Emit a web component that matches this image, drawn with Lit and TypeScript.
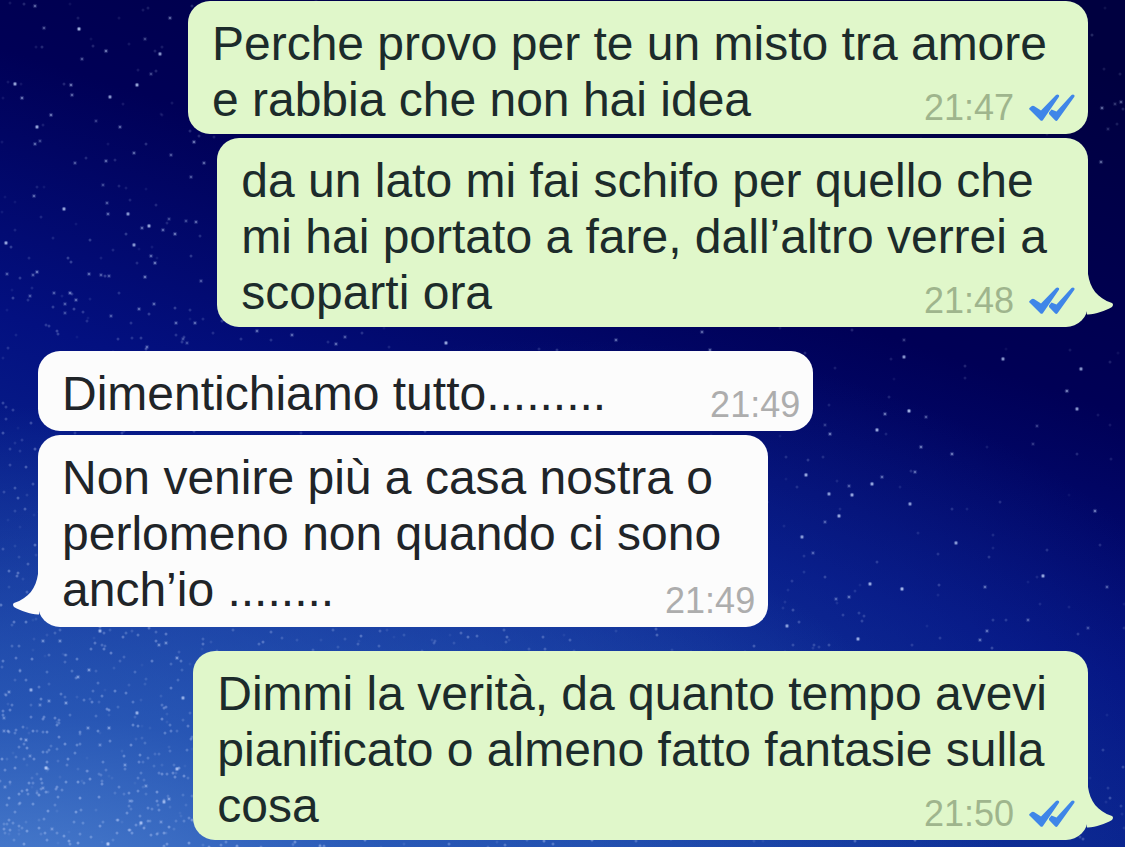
import { LitElement, html, svg, css, nothing } from "lit";
import { customElement, property } from "lit/decorators.js";
import { classMap } from "lit/directives/class-map.js";

interface Message {
  lines: string[];
  time: string;
  sent: boolean;
  last: boolean;
}

const MESSAGES: Message[] = [
  { lines: ["Perche provo per te un misto tra amore", "e rabbia che non hai idea"], time: "21:47", sent: true, last: false },
  { lines: ["da un lato mi fai schifo per quello che", "mi hai portato a fare, dall’altro verrei a", "scoparti ora"], time: "21:48", sent: true, last: true },
  { lines: ["Dimentichiamo tutto........."], time: "21:49", sent: false, last: false },
  { lines: ["Non venire più a casa nostra o", "perlomeno non quando ci sono", "anch’io ........"], time: "21:49", sent: false, last: true },
  { lines: ["Dimmi la verità, da quanto tempo avevi", "pianificato o almeno fatto fantasie sulla", "cosa"], time: "21:50", sent: true, last: true },
];

// Brightest stars: x, y, opacity in percent.
const BRIGHT: number[][] = [
  [35,6,60],[79,29,100],[44,28,50],[106,51,70],[160,54,80],[145,39,40],[170,18,60],[82,59,50],[15,84,90],[71,85,70],[72,95,60],[22,98,70],
  [110,97,80],[137,85,90],[151,74,40],[51,115,70],[37,127,90],[120,127,60],[35,144,60],[40,141,40],[96,121,35],[106,161,60],[134,153,60],[75,163,50],
  [171,155,50],[204,163,60],[194,142,70],[191,177,50],[34,196,60],[103,185,40],[107,203,50],[64,209,90],[108,214,60],[128,214,80],[149,226,90],
  [142,228,60],[163,230,60],[175,234,70],[196,222,60],[169,219,40],[186,221,40],[134,245,80],[6,243,90],[151,256,60],[155,263,70],[145,277,70],[37,272,70],
  [33,275,50],[89,274,60],[7,274,50],[101,275,50],[109,276,50],[70,293,70],[76,300,60],[54,293,50],[65,304,50],[30,296,50],[154,304,60],[139,309,60],
  [176,323,60],[195,323,60],[201,281,50],[111,316,50],[65,313,40],[183,339,40],
  [257,331,60],[292,335,60],[345,337,50],[336,344,60],[446,343,90],[616,340,60],[702,332,60],[147,347,60],[187,343,40],[710,350,60],
  [904,357,80],[904,340,35],[1003,359,80],[1081,369,80],[1067,391,70],[1077,409,80],[909,411,100],[885,414,70],[926,417,50],[877,430,90],
  [830,434,70],[825,425,30],[921,447,70],[952,454,70],[915,472,60],[806,475,90],[872,484,90],[882,477,60],[829,494,80],[852,495,90],[849,486,50],
  [910,504,80],[839,516,90],[825,522,50],[802,537,80],[956,543,80],[1095,511,70],[813,553,50],[870,584,90],[902,589,100],[1043,576,90],
  [985,587,60],[1107,587,50],[849,597,60],[836,599,50],[787,626,80],[858,639,90],[980,640,60],[1028,620,50],[987,631,60],[1088,628,40],[1037,426,35],[1033,444,30],
  [1102,108,60],[1115,104,30],[1121,102,50],[1101,162,60],[1108,129,25],
  [46,768,100],[108,844,100],[141,823,90],[177,769,90],[164,802,80],[169,799,70],[137,713,80],[31,690,80],[66,703,70],[49,701,60],[26,740,70],
  [183,698,80],[177,658,70],[109,728,70],[88,728,60],[78,677,70],[89,670,70],[100,631,80],[43,641,60],[60,641,60],[166,643,60],[159,645,60],[9,692,60],
  [30,756,50],[40,705,50],[4,718,50],[4,731,50],[125,765,60],[146,786,60],[130,801,50],[100,745,50],[52,829,50],[161,822,50],[43,788,50],[5,787,50],
];

// Deterministic scatter of faint stars, denser towards the lower left.
function scatter(count: number, floor: number): number[][] {
  let seed = 7919;
  const next = () => {
    seed = (seed * 16807) % 2147483647;
    return seed / 2147483647;
  };
  const stars: number[][] = [];
  while (stars.length < count) {
    const x = next() * 1125;
    const y = next() * 847;
    const glow = Math.max(0, y / 847 - (x / 1125) * 0.6);
    if (next() < floor + glow * glow) {
      stars.push([Math.round(x), Math.round(y), Math.round(6 + next() * (12 + glow * 26))]);
    }
  }
  return stars;
}

const FAINT = scatter(2000, 0.05);

@customElement("night-sky")
export class NightSky extends LitElement {
  static styles = css`
    :host {
      display: block;
      background:
        radial-gradient(ellipse 90% 60% at 0% 108%, rgba(86, 138, 214, 0.9), rgba(48, 98, 190, 0.7) 40%, rgba(20, 60, 160, 0) 100%),
        radial-gradient(ellipse 65% 60% at 50% 100%, rgba(26, 70, 168, 0.75), rgba(20, 60, 160, 0) 100%),
        linear-gradient(198deg, #000040 6%, #000056 34%, #031080 56%, #0b2a92 80%, #1a4aa8 100%);
    }
    .stars {
      display: block;
      width: 100%;
      height: 100%;
    }
    .star {
      fill: #c4d6ff;
    }
  `;

  render() {
    return html`<svg class="stars" viewBox="0 0 1125 847" preserveAspectRatio="xMidYMid slice" aria-hidden="true">
      ${FAINT.map(([x, y, o]) => svg`<circle class="star" cx=${x} cy=${y} r="1.5" opacity=${o / 100}></circle>`)}
      ${BRIGHT.map(([x, y, o]) => svg`
        <circle class="star" cx=${x} cy=${y} r="2.3" opacity=${o / 400}></circle>
        <circle class="star" cx=${x} cy=${y} r=${o > 75 ? 1.4 : 1.1} opacity=${o / 135}></circle>`)}
    </svg>`;
  }
}

@customElement("chat-bubble")
export class ChatBubble extends LitElement {
  @property({ attribute: false }) message!: Message;

  static styles = css`
    :host {
      display: flex;
    }
    .bubble {
      position: relative;
      display: grid;
      box-sizing: border-box;
      max-width: 100%;
      border-radius: 22px;
    }
    .sent {
      margin-left: auto;
      background: #e0f7ca;
      color: #1c2b2b;
      padding: 15px 13px 6px 24px;
    }
    .received {
      background: #fcfcfc;
      color: #202428;
      padding: 15px 13px 9px 24px;
    }
    .text {
      grid-area: 1 / 1;
      margin: 0;
      padding-right: 28px;
      font-size: 48px;
      line-height: 56px;
    }
    .received .text {
      padding-right: 34px;
    }
    .line {
      display: block;
    }
    .reserve {
      display: inline-block;
      width: 160px;
    }
    .meta {
      grid-area: 1 / 1;
      align-self: end;
      justify-self: end;
      display: flex;
      align-items: center;
      gap: 15px;
      font-size: 36px;
      line-height: 40px;
      color: #9fb58d;
    }
    .received .meta {
      color: #adadad;
      margin-bottom: -3px;
    }
    .ticks {
      display: block;
      width: 46px;
      height: 28px;
      fill: #3f86e8;
    }
    .tail {
      position: absolute;
      bottom: 11px;
      width: 27px;
      height: 42px;
    }
    .sent .tail {
      left: 100%;
      margin-left: -1px;
      fill: #e0f7ca;
    }
    .received .tail {
      right: 100%;
      margin-right: -1px;
      fill: #fcfcfc;
      transform: scaleX(-1);
    }
  `;

  render() {
    const { lines, time, sent, last } = this.message;
    return html`<article class=${classMap({ bubble: true, sent, received: !sent })}>
      <p class="text">
        ${lines.map((line, i) => html`<span class="line">${line}${i === lines.length - 1 ? html`<span class="reserve"></span>` : nothing}</span>`)}
      </p>
      <div class="meta">
        <time>${time}</time>
        ${sent
          ? html`<svg class="ticks" viewBox="0 0 46 28" role="img" aria-label="Letto">
              <path d="M0.500 14 L2.500 12.200 Q3.600 11.300 5 12 L12 16.500 L27 1 Q28.500 -0.200 29.800 1 Q30.500 2 29.800 3 L14 26 Q12.700 27.600 11.300 26.200 L0.500 15.600 Q-0.200 14.800 0.500 14Z"></path>
              <path d="M20 18.500 L22.500 15.500 L27.500 17.500 L42.500 1 Q44 -0.200 45.200 1 Q45.900 2 45.200 3 L28.500 26.200 Q27.300 27.600 26 26.200 L20 20Z"></path>
            </svg>`
          : nothing}
      </div>
      ${last
        ? html`<svg class="tail" viewBox="0 0 27 42" aria-hidden="true"><path d="M0 0 H1 C3 14 10 24 25 29 Q27 30.500 25 33 C18 37 9 40 1 40.500 H0Z"></path></svg>`
        : nothing}
    </article>`;
  }
}

@customElement("app-root")
export class AppRoot extends LitElement {
  static styles = css`
    :host {
      display: block;
      position: relative;
      min-height: 100vh;
      overflow: hidden;
      font-family: "Liberation Sans", Arial, Helvetica, sans-serif;
    }
    .sky {
      position: absolute;
      inset: 0;
    }
    .chat {
      position: relative;
      display: flex;
      flex-direction: column;
      gap: 4px;
      padding: 1px 37px 7px 38px;
    }
    .group-end:not(:last-child) {
      margin-bottom: 20px;
    }
  `;

  render() {
    return html`
      <night-sky class="sky"></night-sky>
      <main class="chat">
        ${MESSAGES.map((m) => html`<chat-bubble class=${classMap({ "group-end": m.last })} .message=${m}></chat-bubble>`)}
      </main>
    `;
  }
}
